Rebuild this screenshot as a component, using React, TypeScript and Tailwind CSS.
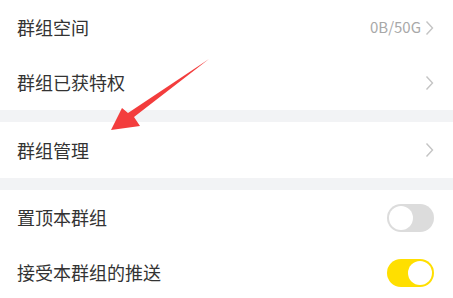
import React from "react";

const Chevron = () => (
  <svg width="9" height="16" viewBox="0 0 9 16" className="ml-1">
    <path d="M1.5 1.5 L7.5 8 L1.5 14.5" fill="none" stroke="#c4c4c4" strokeWidth="1.4" />
  </svg>
);

const Toggle = ({ on }: { on: boolean }) => (
  <div
    className={`w-[47px] h-[28px] rounded-full p-[2px] flex ${
      on ? "bg-[#ffdf00] justify-end" : "bg-[#dcdcdc] justify-start"
    }`}
  >
    <div className="w-[24px] h-[24px] rounded-full bg-white" />
  </div>
);

const Row = ({
  label,
  right,
  h = "h-[55px]",
}: {
  label: string;
  right: React.ReactNode;
  h?: string;
}) => (
  <div className={`flex items-center justify-between pl-[17px] pr-[19px] bg-white ${h}`}>
    <span className="text-[18px] text-[#333]">{label}</span>
    <div className="flex items-center">{right}</div>
  </div>
);

export default function App() {
  return (
    <div
      className="relative w-[453px] h-[298px] overflow-hidden bg-white"
      style={{ fontFamily: '"Noto Sans CJK SC", "Noto Sans", sans-serif' }}
    >
      <Row
        label="群组空间"
        right={
          <>
            <span className="text-[15px] text-[#a8a8a8]">0B/50G</span>
            <Chevron />
          </>
        }
      />
      <Row label="群组已获特权" right={<Chevron />} />
      <div className="h-[12px] bg-[#f2f3f5]" />
      <Row label="群组管理" right={<Chevron />} h="h-[56px]" />
      <div className="h-[12px] bg-[#f2f3f5]" />
      <Row label="置顶本群组" right={<Toggle on={false} />} />
      <Row label="接受本群组的推送" right={<Toggle on={true} />} />

      <svg className="absolute left-0 top-0" width="453" height="298" viewBox="0 0 453 298">
        <polygon
          points="209,59 134,117 140,126 111,130 122,108 128,113"
          fill="#f33d3d"
        />
      </svg>
    </div>
  );
}
